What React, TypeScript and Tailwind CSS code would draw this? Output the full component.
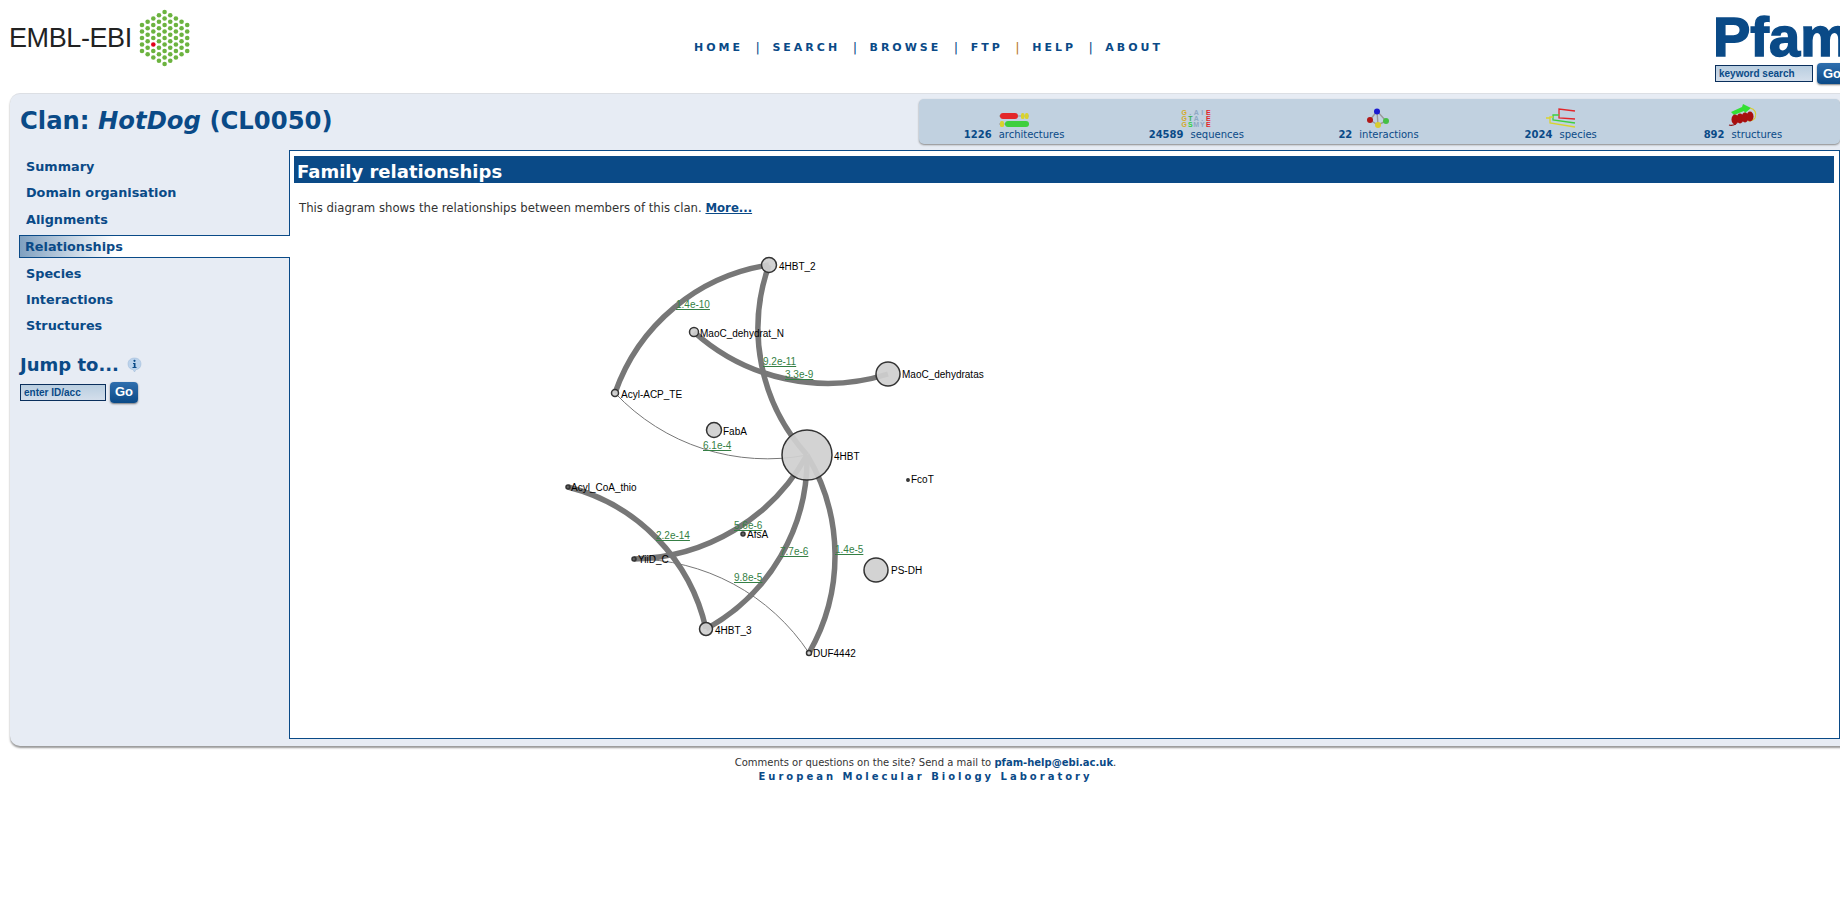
const BLUE = '#0a4a87';

const NODES = [
  { name: '4HBT_2', x: 769, y: 264, r: 7.5, lx: 779, ly: 270 },
  { name: 'MaoC_dehydrat_N', x: 694, y: 331, r: 4.5, lx: 700, ly: 337 },
  { name: 'MaoC_dehydratas', x: 888, y: 373, r: 12, lx: 902, ly: 378 },
  { name: 'Acyl-ACP_TE', x: 615, y: 392, r: 3.5, lx: 621, ly: 398 },
  { name: 'FabA', x: 714, y: 429, r: 7.5, lx: 723, ly: 435 },
  { name: '4HBT', x: 807, y: 454, r: 25, lx: 834, ly: 460 },
  { name: 'FcoT', x: 908, y: 479, r: 1.2, lx: 911, ly: 483 },
  { name: 'Acyl_CoA_thio', x: 568, y: 486, r: 2, lx: 571, ly: 491 },
  { name: 'AfsA', x: 743, y: 533, r: 2, lx: 747, ly: 538 },
  { name: 'YiiD_C', x: 634, y: 558, r: 2, lx: 638, ly: 563 },
  { name: 'PS-DH', x: 876, y: 569, r: 12, lx: 891, ly: 574 },
  { name: '4HBT_3', x: 706, y: 628, r: 6.5, lx: 715, ly: 634 },
  { name: 'DUF4442', x: 809, y: 652, r: 2.5, lx: 813, ly: 657 },
];

const EDGES = [
  { d: 'M769 264 A194 194 0 0 0 615 392', w: 5.5 },
  { d: 'M769 264 A188 188 0 0 0 807 454', w: 5.5 },
  { d: 'M694 331 A200 200 0 0 0 888 373', w: 5.5 },
  { d: 'M615 392 A209 209 0 0 0 807 454', w: 1 },
  { d: 'M807 454 A202 202 0 0 1 634 558', w: 5.5 },
  { d: 'M568 486 A189 189 0 0 1 706 628', w: 5.5 },
  { d: 'M807 454 A194 194 0 0 1 706 628', w: 5.5 },
  { d: 'M807 454 A195 195 0 0 1 809 652', w: 5.5 },
  { d: 'M634 558 A210 210 0 0 1 809 652', w: 1 },
];

const SCORES = [
  { t: '1.4e-10', x: 676, y: 308 },
  { t: '9.2e-11', x: 763, y: 365 },
  { t: '3.3e-9', x: 785, y: 378 },
  { t: '6.1e-4', x: 703, y: 449 },
  { t: '2.2e-14', x: 656, y: 539 },
  { t: '5.6e-6', x: 734, y: 529 },
  { t: '7.7e-6', x: 780, y: 555 },
  { t: '1.4e-5', x: 835, y: 553 },
  { t: '9.8e-5', x: 734, y: 581 },
];

const MENU = ['Summary', 'Domain organisation', 'Alignments', 'Relationships', 'Species', 'Interactions', 'Structures'];
const NAV = ['HOME', 'SEARCH', 'BROWSE', 'FTP', 'HELP', 'ABOUT'];

function HexLogo() {
  const counts = [5, 6, 7, 8, 9, 8, 7, 6, 5];
  return (
    <svg width="56" height="60" viewBox="0 0 56 60" className="shrink-0">
      {counts.map((n, col) =>
        Array.from({ length: n }).map((_, i) => {
          const cx = 5 + col * 5.65;
          const cy = 30 + (i - (n - 1) / 2) * 6.5;
          const red = col === 2 && i === 4;
          return <circle key={`${col}-${i}`} cx={cx} cy={cy} r="2.3" fill={red ? '#e2001a' : '#6cb33f'} />;
        }),
      )}
    </svg>
  );
}

function ArchIcon() {
  return (
    <svg width="30" height="16" viewBox="0 0 30 16">
      <line x1="0" y1="4" x2="30" y2="4" stroke="#999" />
      <rect x="1" y="1" width="18" height="6" rx="3" fill="#e3262a" />
      <rect x="22" y="1" width="3.5" height="6" rx="1.5" fill="#d9d32e" />
      <rect x="26" y="1" width="3.5" height="6" rx="1.5" fill="#d9d32e" />
      <line x1="0" y1="12" x2="30" y2="12" stroke="#999" />
      <rect x="1" y="9" width="4" height="6" rx="1.5" fill="#d9d32e" />
      <rect x="6" y="9" width="24" height="6" rx="3" fill="#3ecf3e" />
    </svg>
  );
}

function SeqIcon() {
  const rows = [
    [['G', '#d6a92a'], ['.', '#8fa8c4'], ['A', '#8fa8c4'], ['I', '#8fa8c4'], ['E', '#e3262a']],
    [['G', '#d6a92a'], ['T', '#3ab04a'], ['A', '#8fa8c4'], ['.', '#8fa8c4'], ['E', '#e3262a']],
    [['G', '#d6a92a'], ['S', '#30d040'], ['M', '#8fa8c4'], ['Y', '#8fa8c4'], ['E', '#e3262a']],
  ];
  return (
    <div className="grid grid-cols-5 w-[30px] h-[18px] font-['Liberation_Sans',sans-serif] font-bold text-[7px] leading-[6px] text-center">
      {rows.flat().map(([c, col], i) => (
        <span key={i} style={{ color: col }}>{c}</span>
      ))}
    </div>
  );
}

function InteractionIcon() {
  return (
    <svg width="24" height="20" viewBox="0 0 24 20">
      <path d="M11 3 L4 12 L12 17 L20 13 Z M11 3 L12 17" fill="none" stroke="#999" strokeWidth="1.4" />
      <circle cx="11" cy="3.5" r="3" fill="#1a1ad0" />
      <circle cx="4" cy="12" r="3" fill="#b01818" />
      <circle cx="20" cy="13" r="3" fill="#45c045" />
      <circle cx="12" cy="17" r="3" fill="#d8cc30" />
    </svg>
  );
}

function SpeciesIcon() {
  return (
    <svg width="30" height="20" viewBox="0 0 30 20" fill="none" strokeWidth="1.3">
      <path d="M29 3 L13 1 V10 L29 11" stroke="#e3262a" />
      <path d="M29 15 L7 12 V7 H13" stroke="#3ecf3e" />
      <path d="M29 19 L4 15 V9 H7 M0 10 H4" stroke="#d9d32e" />
    </svg>
  );
}

function StructureIcon() {
  return (
    <svg width="30" height="24" viewBox="0 0 30 24" fill="none">
      <path d="M3 8 L14 3 L15 0 L23 4 L17 9 L16 7 L6 11 Z" fill="#34e034" />
      <path d="M22 4 C27 5 29 9 27 14 C25 17 22 17 20 17" stroke="#d8cc30" strokeWidth="1.2" />
      <path d="M1 21 C4 22 6 21 8 20" stroke="#8a1010" strokeWidth="1.2" />
      <ellipse cx="7" cy="15.5" rx="3.5" ry="5" fill="#a80f0f" />
      <ellipse cx="12" cy="14.5" rx="3.5" ry="5" fill="#a80f0f" />
      <ellipse cx="17" cy="13.5" rx="3.5" ry="5" fill="#a80f0f" />
      <ellipse cx="22" cy="12.5" rx="3.5" ry="5" fill="#a80f0f" />
    </svg>
  );
}

const STATS = [
  { n: '1226', label: 'architectures', icon: <ArchIcon /> },
  { n: '24589', label: 'sequences', icon: <SeqIcon /> },
  { n: '22', label: 'interactions', icon: <InteractionIcon /> },
  { n: '2024', label: 'species', icon: <SpeciesIcon /> },
  { n: '892', label: 'structures', icon: <StructureIcon /> },
];

function GoButton({ size }: { size: string }) {
  return (
    <span className={`${size} flex items-center justify-center rounded-[4px] bg-gradient-to-b from-[#2f6fae] to-[#0a4a87] text-white font-bold text-[13px] shadow-[0_1px_2px_rgba(0,0,0,0.5)] font-['Liberation_Sans',sans-serif]`}>
      Go
    </span>
  );
}

function FamilyDiagram() {
  return (
    <svg width="1000" height="480" viewBox="0 0 1000 480" className="mt-[3px] block">
      <g transform="translate(-294,-218)">
        {EDGES.map((e, i) => (
          <path key={i} d={e.d} fill="none" stroke="#777777" strokeWidth={e.w} />
        ))}
        {NODES.map((n) => (
          <circle
            key={n.name}
            cx={n.x}
            cy={n.y}
            r={n.r}
            fill={n.r <= 2 ? '#555555' : '#d0d0d0'}
            fillOpacity="0.93"
            stroke="#333333"
            strokeWidth="1.5"
          />
        ))}
        <g transform="translate(0,-1)" fontFamily="'Liberation Sans', Arial, sans-serif" fontSize="10">
          {NODES.map((n) => (
            <text key={n.name} x={n.lx} y={n.ly} fill="#000000">{n.name}</text>
          ))}
          {SCORES.map((s) => (
            <text key={s.t + s.x} x={s.x} y={s.y} fill="#357f45" textDecoration="underline">{s.t}</text>
          ))}
        </g>
      </g>
    </svg>
  );
}

export default function App() {
  return (
    <div className="w-[1840px] h-[910px] overflow-hidden bg-white font-['DejaVu_Sans',sans-serif] text-[#333]">
      {/* Top banner */}
      <header className="relative h-[93px] flex">
        <div className="w-[694px] shrink-0 pl-[9px] pt-[8px] flex items-start">
          <span className="mt-[14px] text-[27px] leading-[32px] text-[#222] tracking-[-0.4px] font-['Liberation_Sans',sans-serif]">EMBL-EBI</span>
          <span className="ml-[5px]"><HexLogo /></span>
        </div>
        <nav className="h-[96px] flex items-center text-[11px] font-bold tracking-[3px]" style={{ color: BLUE }}>
          {NAV.map((item, i) => (
            <span key={item} className="flex items-center">
              <span>{item}</span>
              {i < NAV.length - 1 && (
                <span className={`mx-[12.5px] text-[13px] font-normal tracking-normal ${item === 'FTP' ? 'text-[#b8792a]' : ''}`}>|</span>
              )}
            </span>
          ))}
        </nav>
        <div className="absolute left-[1715px] top-[2px] w-[140px]">
          <div className="h-[60px] -ml-[2px] text-[56px] leading-[69px] font-bold whitespace-nowrap [-webkit-text-stroke:1.5px_#0a4a87] font-['Liberation_Sans',sans-serif]" style={{ color: BLUE }}>
            Pfam
          </div>
          <div className="flex items-center gap-[4px] mt-[1px]">
            <span className="w-[98px] h-[17px] pl-[3px] flex items-center border border-[#0a2f5c] bg-gradient-to-b from-[#b9cee0] to-[#d3deeb] text-[10px] font-bold font-['Liberation_Sans',sans-serif]" style={{ color: BLUE }}>
              keyword search
            </span>
            <GoButton size="w-[30px] h-[21px]" />
          </div>
        </div>
      </header>

      {/* Main rounded panel */}
      <div className="ml-[10px] w-[1860px] h-[653px] rounded-[10px] bg-[#e7ecf4] border-t border-[#dcdfe4] shadow-[0_2px_2px_#999]">
        <div className="flex h-[56px]">
          <h1 className="w-[909px] pl-[10px] pt-[12px] text-[24.3px] leading-[30px] font-bold" style={{ color: BLUE }}>
            Clan: <em>HotDog</em> (CL0050)
          </h1>
          <div className="mt-[5px] w-[921px] h-[45px] pl-[4px] pr-[6px] grid grid-cols-5 rounded-[5px] bg-[#c1d1e0] shadow-[0_1px_2px_#888] text-[10px]" style={{ color: BLUE }}>
            {STATS.map((s) => (
              <div key={s.label} className="flex flex-col items-center justify-end pb-[3px]">
                <div className="h-[24px] flex items-end pb-[1px]">{s.icon}</div>
                <div className="leading-[12px] whitespace-nowrap">
                  <span className="font-bold mr-[7px]">{s.n}</span>
                  {s.label}
                </div>
              </div>
            ))}
          </div>
        </div>

        <div className="flex">
          {/* Side menu */}
          <aside className="w-[280px] shrink-0 pt-[3px] pl-[9px]">
            <ul className="text-[12.8px] font-bold" style={{ color: BLUE }}>
              {MENU.map((item, i) =>
                item === 'Relationships' ? (
                  <li
                    key={item}
                    className="relative z-10 h-[23px] w-[271px] flex items-center pl-[5px] pt-[1px] mt-[2px] mb-[3px] border border-r-0 border-[#0a4a87] bg-[linear-gradient(90deg,#7fa0c0_0,#ffffff_95px)]"
                  >
                    {item}
                  </li>
                ) : (
                  <li key={item} className={`flex items-center pl-[7px] ${i > 3 ? 'h-[26px]' : 'h-[26.5px]'}`}>
                    {item}
                  </li>
                ),
              )}
            </ul>
            <div className="mt-[13px] pl-[1px] flex items-center gap-[8px]">
              <span className="text-[18px] leading-[26px] font-bold" style={{ color: BLUE }}>Jump to...</span>
              <svg width="15" height="16" viewBox="0 0 15 16">
                <path d="M7.5 1 C11.5 1 14 3.5 14 7 C14 10.5 11.5 12.5 9 12.5 L7.5 15 L6 12.5 C3.5 12.5 1 10.5 1 7 C1 3.5 3.5 1 7.5 1 Z" fill="#bcd3ec" stroke="#9db8d6" strokeWidth="0.5" />
                <circle cx="7.5" cy="3.8" r="1.1" fill="#0a4a87" />
                <path d="M6 6 H8.5 V10 H9.5 V11 H5.5 V10 H6.8 V7 H6 Z" fill="#0a4a87" />
              </svg>
            </div>
            <div className="mt-[4px] pl-[1px] flex items-center gap-[4px]">
              <span className="w-[86px] h-[17px] pl-[3px] flex items-center border border-[#0a2f5c] bg-gradient-to-b from-[#b9cee0] to-[#d3deeb] text-[10px] font-bold font-['Liberation_Sans',sans-serif]" style={{ color: BLUE }}>
                enter ID/acc
              </span>
              <GoButton size="w-[28px] h-[21px]" />
            </div>
          </aside>

          {/* Content */}
          <main className="w-[1551px] h-[589px] border border-[#0a4a87] bg-white pt-[5px] pr-[5px] pl-[4px] -ml-[1px]">
            <h2 className="h-[27px] pl-[3px] pt-[3px] flex items-center text-[18px] font-bold text-white bg-[#0a4a87]">Family relationships</h2>
            <p className="mt-[17px] pl-[5px] text-[11.7px] leading-[16px]">
              This diagram shows the relationships between members of this clan.{' '}
              <span className="font-bold underline" style={{ color: BLUE }}>More...</span>
            </p>
            <FamilyDiagram />
          </main>
        </div>
      </div>

      {/* Footer */}
      <footer className="pl-[11px] mt-[9px] text-center text-[10px]">
        <p className="leading-[15px]">
          Comments or questions on the site? Send a mail to{' '}
          <span className="font-bold" style={{ color: BLUE }}>pfam-help@ebi.ac.uk</span>.
        </p>
        <p className="leading-[14px] font-bold tracking-[3px]" style={{ color: BLUE }}>European Molecular Biology Laboratory</p>
      </footer>
    </div>
  );
}
